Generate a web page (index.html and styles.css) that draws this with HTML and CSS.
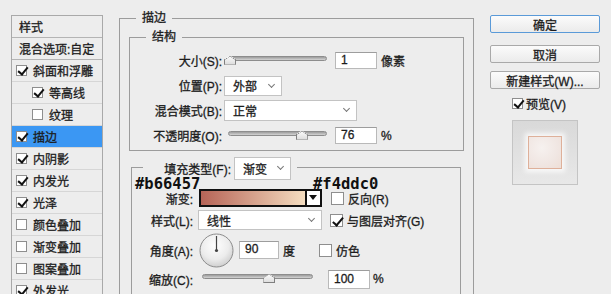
FILE: index.html
```html
<!DOCTYPE html>
<html lang="zh-CN">

<head>
    <meta charset="UTF-8">
    <meta name="viewport" content="width=device-width, initial-scale=1.0">
    <title>图层样式</title>
    <link rel="stylesheet" href="styles.css">
</head>

<body>
    <div class="dialog">
        <div class="style-list">
            <div class="item head">样式</div>
            <div class="item head">混合选项:自定</div>
            <div class="item"><span class="cb on"></span>斜面和浮雕</div>
            <div class="item sub"><span class="cb on"></span>等高线</div>
            <div class="item sub"><span class="cb"></span>纹理</div>
            <div class="item active"><span class="cb on"></span>描边</div>
            <div class="item"><span class="cb on"></span>内阴影</div>
            <div class="item"><span class="cb on"></span>内发光</div>
            <div class="item"><span class="cb on"></span>光泽</div>
            <div class="item"><span class="cb"></span>颜色叠加</div>
            <div class="item"><span class="cb"></span>渐变叠加</div>
            <div class="item"><span class="cb"></span>图案叠加</div>
            <div class="item"><span class="cb on"></span>外发光</div>
        </div>

        <fieldset class="group">
            <legend>描边</legend>

            <fieldset class="sub-group">
                <legend>结构</legend>
                <div class="rows">
                    <div class="row">
                        <label class="lbl">大小(S):</label>
                        <div class="slider">
                            <span class="track"><span class="thumb" style="left: 1%"></span></span>
                        </div>
                        <span class="field">1</span>
                        <span class="unit">像素</span>
                    </div>
                    <div class="row">
                        <label class="lbl">位置(P):</label>
                        <span class="select pos">外部</span>
                    </div>
                    <div class="row">
                        <label class="lbl">混合模式(B):</label>
                        <span class="select blend">正常</span>
                    </div>
                    <div class="row">
                        <label class="lbl">不透明度(O):</label>
                        <div class="slider">
                            <span class="track"><span class="thumb" style="left: 75%"></span></span>
                        </div>
                        <span class="field">76</span>
                        <span class="unit">%</span>
                    </div>
                </div>
            </fieldset>

            <fieldset class="fill-group">
                <legend>
                    <span class="legend-inner">
                        <label class="fill-lbl">填充类型(F):</label>
                        <span class="select fill">渐变</span>
                    </span>
                </legend>
                <div class="rows lower">
                    <div class="row r-grad">
                        <label class="lbl">渐变:</label>
                        <div class="gradient">
                            <span class="ramp"></span>
                            <span class="drop"></span>
                        </div>
                        <span class="cb big"></span>
                        <span class="opt">反向(R)</span>
                    </div>
                    <div class="row r-style">
                        <label class="lbl">样式(L):</label>
                        <span class="select kind">线性</span>
                        <span class="cb big on"></span>
                        <span class="opt">与图层对齐(G)</span>
                    </div>
                    <div class="row r-angle">
                        <label class="lbl">角度(A):</label>
                        <svg class="dial" width="35" height="35" viewBox="0 0 35 35">
                            <defs>
                                <radialGradient id="dialFill" cx="45%" cy="35%" r="70%">
                                    <stop offset="0" stop-color="#ffffff" />
                                    <stop offset="0.6" stop-color="#ececec" />
                                    <stop offset="1" stop-color="#c9c9c9" />
                                </radialGradient>
                            </defs>
                            <circle cx="17.5" cy="17.5" r="16.5" fill="url(#dialFill)" stroke="#8c8c8c" />
                            <line x1="17.5" y1="17.5" x2="17.5" y2="3" stroke="#444444" stroke-width="1.2" />
                            <circle cx="17.5" cy="17.5" r="1.6" fill="#444444" />
                        </svg>
                        <span class="field angle">90</span>
                        <span class="unit">度</span>
                        <span class="cb big dither"></span>
                        <span class="opt">仿色</span>
                    </div>
                    <div class="row r-scale">
                        <label class="lbl">缩放(C):</label>
                        <div class="slider wide">
                            <span class="track"><span class="thumb" style="left: 61%"></span></span>
                        </div>
                        <span class="field scale">100</span>
                        <span class="unit">%</span>
                    </div>
                </div>
            </fieldset>
        </fieldset>

        <div class="actions">
            <button class="btn primary">确定</button>
            <button class="btn">取消</button>
            <button class="btn">新建样式(W)...</button>
            <label class="preview-check"><span class="cb on"></span>预览(V)</label>
            <div class="preview">
                <div class="swatch"></div>
            </div>
        </div>
    </div>

    <span class="hex hex-a">#b66457</span>
    <span class="hex hex-b">#f4ddc0</span>
</body>

</html>
```

FILE: styles.css
```css
* {
    box-sizing: border-box;
}

body {
    margin: 0;
    width: 611px;
    height: 294px;
    overflow: hidden;
    position: relative;
    background-color: #ededed;
    font-family: "Liberation Sans", "Noto Sans CJK SC", sans-serif;
    font-size: 12px;
    color: #1c1c1c;
}

.dialog {
    display: flex;
    align-items: flex-start;
    -webkit-text-stroke: 0.3px #1c1c1c;
}

/* left list of effects */
.style-list {
    margin: 15px 0 0 11px;
    width: 92px;
    border: 1px solid #a9a9a9;
    border-bottom: none;
}

.item {
    height: 22px;
    display: flex;
    align-items: center;
    padding-left: 4px;
    border-bottom: 1px solid #d6d6d6;
    white-space: nowrap;
}

.item.head {
    padding-left: 7px;
    border-bottom-color: #b4b4b4;
}

.item.sub {
    padding-left: 20px;
}

.item.active {
    background-color: #3b97f3;
}

/* checkboxes */
.cb {
    position: relative;
    flex: none;
    width: 11px;
    height: 11px;
    margin-right: 6px;
    background: #fff;
    border: 1px solid #8e8e8e;
}

.cb.on::after {
    content: "";
    position: absolute;
    left: 3px;
    top: -1px;
    width: 4px;
    height: 8px;
    border-right: 2px solid #111;
    border-bottom: 2px solid #111;
    transform: rotate(40deg);
}

.cb.big {
    width: 13px;
    height: 13px;
    margin-right: 4px;
}

.cb.big.on::after {
    left: 4px;
    top: 0;
    width: 4px;
    height: 9px;
}

/* fieldsets */
fieldset {
    margin: 0;
    padding: 0;
    min-width: 0;
    border: 1px solid #9c9c9c;
}

legend {
    padding: 0 6px;
    margin-left: 16px;
    height: 16px;
    line-height: 16px;
}

.group {
    margin: 10px 0 0 16px;
    width: 355px;
    height: 320px;
    border-bottom: none;
}

.sub-group {
    margin: 3px 9px 0 9px;
}

.rows {
    padding: 3px 0 2px;
}

.row {
    height: 25px;
    display: flex;
    align-items: center;
    white-space: nowrap;
}

.lbl {
    width: 92px;
    margin-right: 2px;
    text-align: right;
    flex: none;
}

/* sliders */
.slider {
    width: 107px;
    height: 10px;
    padding: 0 4px;
    flex: none;
}

.slider.wide {
    width: 119px;
}

.track {
    display: block;
    position: relative;
    height: 5px;
    border: 1px solid #8d8d8d;
    border-radius: 3px;
    background: linear-gradient(#9c9c9c, #d4d4d4);
}

.thumb {
    position: absolute;
    top: -1px;
    width: 12px;
    height: 9px;
    margin-left: -6px;
    background: linear-gradient(#fdfdfd, #dedede);
    border: 1px solid #7f7f7f;
    border-top: none;
    clip-path: polygon(50% 0, 100% 45%, 100% 100%, 0 100%, 0 45%);
}

.thumb::before {
    content: "";
    position: absolute;
    left: 0;
    top: 0;
    width: 100%;
    height: 100%;
    background: linear-gradient(to bottom right, transparent 47%, #7f7f7f 48%, transparent 62%) left top / 50% 45% no-repeat,
        linear-gradient(to bottom left, transparent 47%, #7f7f7f 48%, transparent 62%) right top / 50% 45% no-repeat;
}

.field {
    flex: none;
    width: 42px;
    height: 17px;
    line-height: 15px;
    margin-left: 4px;
    padding-left: 5px;
    background: #fff;
    border: 1px solid #b9b9b9;
    border-top-color: #9d9d9d;
}

.unit {
    margin-left: 4px;
}

/* dropdowns */
.select {
    position: relative;
    flex: none;
    display: flex;
    align-items: center;
    height: 20px;
    padding-left: 8px;
    background: #fff;
    border: 1px solid #c3c3c3;
}

.select::after {
    content: "";
    position: absolute;
    right: 7px;
    top: 5px;
    width: 4px;
    height: 4px;
    border-right: 1.5px solid #777;
    border-bottom: 1.5px solid #777;
    transform: rotate(45deg);
}

.select.pos {
    width: 58px;
}

.select.blend {
    width: 133px;
    height: 21px;
}

.select.kind {
    width: 124px;
}

.select.fill {
    width: 57px;
    height: 23px;
}

.select.fill::after {
    top: 6px;
}

/* gradient fill block */
.fill-group {
    margin: 3px 12px 0 11px;
    height: 200px;
    border-bottom: none;
}

.fill-group legend {
    margin-left: 11px;
    padding: 3px 6px 0 0;
    height: 26px;
    line-height: normal;
}

.legend-inner {
    display: flex;
    align-items: center;
}

.fill-lbl {
    width: 88px;
    margin-right: 3px;
    text-align: right;
}

.rows.lower {
    padding-top: 8px;
}

.lower .lbl {
    width: 61px;
    margin-right: 5px;
}

.r-grad {
    height: 20px;
}

.r-style {
    height: 24px;
}

.r-angle {
    height: 36px;
}

.r-scale {
    height: 22px;
}

.gradient {
    flex: none;
    display: flex;
    width: 123px;
    height: 18px;
    margin-left: 1px;
    border: 2px solid #111;
    margin-right: 9px;
}

.ramp {
    flex: 1;
    background: linear-gradient(to right, #b66457, #f4ddc0);
}

.drop {
    position: relative;
    width: 15px;
    background: #fff;
    border-left: 2px solid #111;
}

.drop::after {
    content: "";
    position: absolute;
    left: 2px;
    top: 4px;
    border-left: 4px solid transparent;
    border-right: 4px solid transparent;
    border-top: 5px solid #111;
}

.r-style .cb {
    margin-left: 8px;
}

.dial {
    flex: none;
    margin-left: 1px;
}

.field.angle {
    width: 40px;
    height: 18px;
    margin-left: 5px;
}

.cb.dither {
    margin-left: 24px;
}

.field.scale {
    margin-left: 11px;
    height: 19px;
    line-height: 17px;
}

.r-scale .unit {
    margin-left: 3px;
}

/* right column */
.actions {
    margin-left: 16px;
    width: 110px;
    display: flex;
    flex-direction: column;
}

.btn {
    height: 18px;
    padding: 0;
    font-family: inherit;
    font-size: 12px;
    color: #1c1c1c;
    -webkit-text-stroke: 0.3px #1c1c1c;
    background: linear-gradient(#fbfbfb, #ebebeb);
    border: 1px solid #a9a9a9;
    border-radius: 2px;
    margin-top: 8px;
}

.btn.primary {
    margin-top: 15px;
    border-color: #5a9ad8;
}

.btn.primary + .btn {
    margin-top: 12px;
}

.preview-check {
    display: flex;
    align-items: center;
    height: 12px;
    margin: 8px 0 0 22px;
}

.preview-check .cb {
    margin-right: 3px;
}

.preview {
    width: 66px;
    height: 65px;
    margin: 11px 0 0 22px;
    display: flex;
    align-items: center;
    justify-content: center;
    background: linear-gradient(#d9d9d9, #e8e8e8);
    border: 1px solid #c4c4c4;
}

.swatch {
    width: 34px;
    height: 33px;
    background: radial-gradient(circle at 40% 35%, #f6f1ef, #f0e6e2 60%, #eeded6);
    border: 1px solid #deb09a;
    box-shadow: 0 0 5px 3px rgba(255, 255, 255, 0.8);
}

/* colour notes laid over the panel */
.hex {
    position: absolute;
    top: 177px;
    font-family: "DejaVu Sans Mono", monospace;
    font-weight: bold;
    font-size: 15.5px;
    line-height: 15px;
    color: #111;
}

.hex-a {
    left: 135px;
}

.hex-b {
    left: 313px;
}
```
